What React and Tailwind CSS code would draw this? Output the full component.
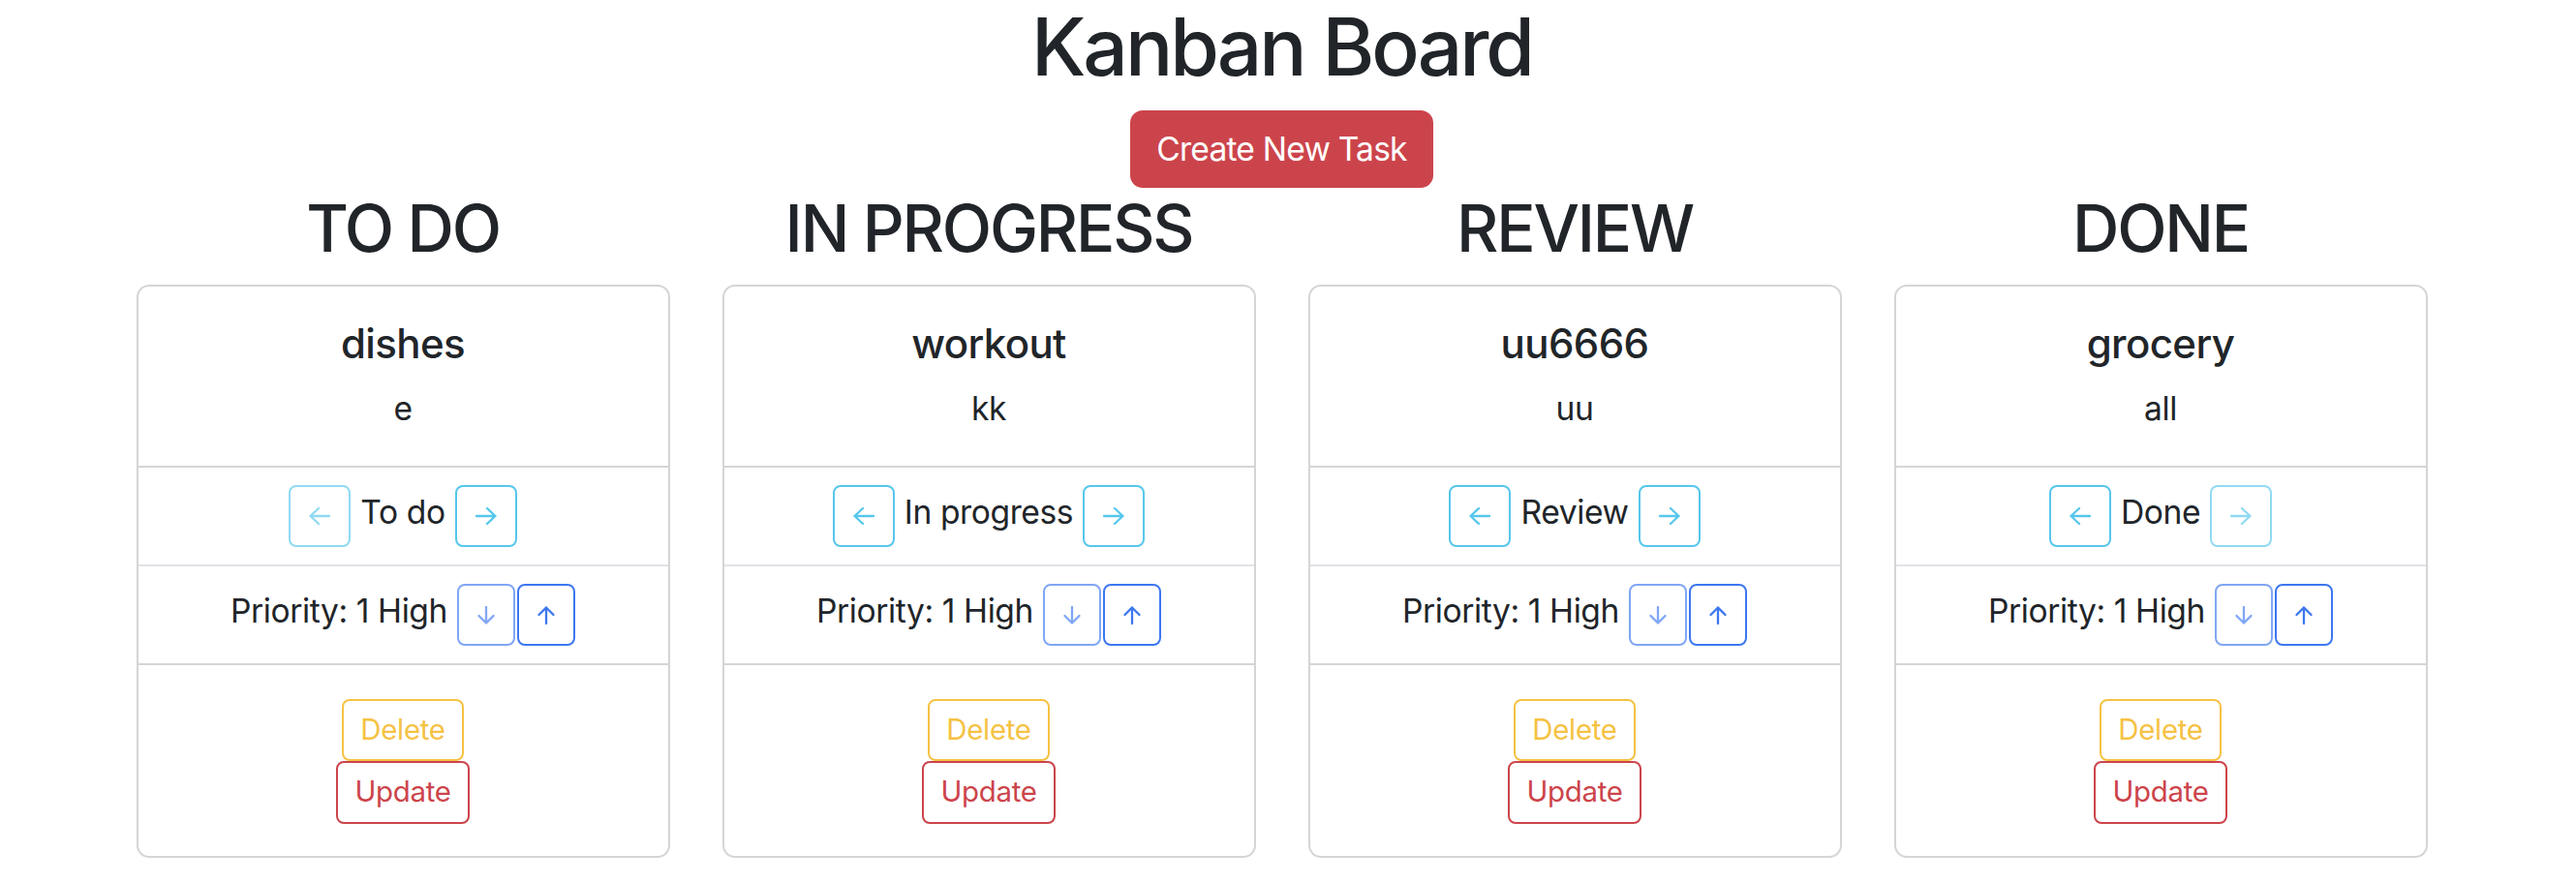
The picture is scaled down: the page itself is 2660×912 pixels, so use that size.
import React from 'react';

const tasks = [
    { column: 'TO DO', title: 'dishes', desc: 'e', status: 'To do', prevOff: true, nextOff: false },
    { column: 'IN PROGRESS', title: 'workout', desc: 'kk', status: 'In progress', prevOff: false, nextOff: false },
    { column: 'REVIEW', title: 'uu6666', desc: 'uu', status: 'Review', prevOff: false, nextOff: false },
    { column: 'DONE', title: 'grocery', desc: 'all', status: 'Done', prevOff: false, nextOff: true },
];

const Arrow = ({ dir }) => {
    const paths = {
        left: 'M21 9H1.5M10 1L1.5 9L10 17',
        right: 'M1 9H20.5M12 1L20.5 9L12 17',
    };
    const vpaths = {
        down: 'M9 1V17.5M1.5 10L9 17.5L16.5 10',
        up: 'M9 18V1.5M1.5 9L9 1.5L16.5 9',
    };
    if (paths[dir]) {
        return (
            <svg width="22" height="18" viewBox="0 0 22 18" fill="none" stroke="currentColor" strokeWidth="2.3" strokeLinecap="round" strokeLinejoin="round">
                <path d={paths[dir]} />
            </svg>
        );
    }
    return (
        <svg width="18" height="19" viewBox="0 0 18 19" fill="none" stroke="currentColor" strokeWidth="2.3" strokeLinecap="round" strokeLinejoin="round">
            <path d={vpaths[dir]} />
        </svg>
    );
};

const MoveBtn = ({ dir, off }) => (
    <button className={`w-[64px] h-[64px] rounded-[8px] border-2 border-[#56c7ec] text-[#56c7ec] flex items-center justify-center bg-white ${off ? 'opacity-[0.65]' : ''}`}>
        <Arrow dir={dir} />
    </button>
);

const PrioBtn = ({ dir, off }) => (
    <button className={`w-[60px] h-[64px] rounded-[8px] border-2 border-[#3d77f0] text-[#3d77f0] flex items-center justify-center bg-white ${off ? 'opacity-[0.65]' : ''}`}>
        <Arrow dir={dir} />
    </button>
);

const TaskCard = ({ task }) => (
    <div className="w-full rounded-[13px] border-2 border-[#d5d5d5] bg-white overflow-hidden text-center">
        <div className="p-[34px]">
            <h5 className="text-[42px] leading-[50px] mb-[17px] font-medium tracking-[-0.6px]">{task.title}</h5>
            <p className="text-[33.6px] leading-[50px] tracking-[-0.4px]">{task.desc}</p>
        </div>
        <div className="border-t-2 border-[#d5d5d5] py-[18px] flex items-center justify-center gap-[10px]">
            <MoveBtn dir="left" off={task.prevOff} />
            <span className="text-[33.6px] leading-[50px] mb-[8px] tracking-[-0.4px]">{task.status}</span>
            <MoveBtn dir="right" off={task.nextOff} />
        </div>
        <div className="border-t-2 border-[#e0e3e7] py-[18px] flex items-center justify-center">
            <span className="text-[33.6px] leading-[50px] mb-[8px] mr-[10px] tracking-[-0.4px]">Priority: 1 High</span>
            <PrioBtn dir="down" off />
            <div className="w-[2px]"></div>
            <PrioBtn dir="up" />
        </div>
        <div className="border-t-2 border-[#d5d5d5] pt-[35px] pb-[33px] flex flex-col items-center">
            <button className="h-[64px] px-[17px] rounded-[8px] border-2 border-[#f5c243] text-[#f5c243] text-[29.4px] tracking-[-0.3px] bg-white">Delete</button>
            <button className="h-[65px] px-[17px] rounded-[8px] border-2 border-[#cc444b] text-[#cc444b] text-[29.4px] tracking-[-0.3px] bg-white">Update</button>
        </div>
    </div>
);

export default function App() {
    return (
        <div className="min-h-screen bg-white pr-[13px] text-[#212529] font-[Inter,sans-serif]">
            <div className="flex flex-col items-center">
                <h1 className="text-[82px] leading-[98px] mb-[16px] font-medium tracking-[-3px]">Kanban Board</h1>
                <button className="h-[80px] px-[27px] rounded-[13px] bg-[#cc444b] text-white text-[33.6px] tracking-[-0.8px]">Create New Task</button>
            </div>
            <div className="w-[2420px] mx-auto mt-[2px] grid grid-cols-4">
                {tasks.map(task => (
                    <div key={task.column} className="px-[27px] flex flex-col items-center">
                        <h2 className="text-[67px] leading-[80px] mb-[18px] font-medium tracking-[-2.2px]">{task.column}</h2>
                        <TaskCard task={task} />
                    </div>
                ))}
            </div>
        </div>
    );
}
